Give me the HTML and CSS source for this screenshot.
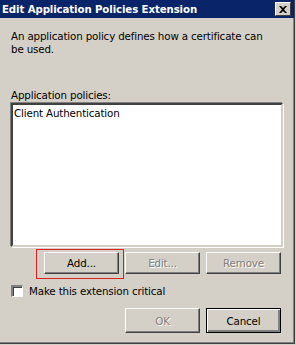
FILE: index.html
```html
<!DOCTYPE html>
<html>
<head>
<meta charset="utf-8">
<link rel="stylesheet" href="styles.css">
</head>
<body>
<div class="window">
  <div class="titlebar">
    <span class="title">Edit Application Policies Extension</span>
    <span class="close"><svg width="8" height="7" viewBox="0 0 8 7"><path d="M0 0h2l2 2 2-2h2l-3 3.5 3 3.5h-2l-2-2-2 2h-2l3-3.5z" fill="#000"/></svg></span>
  </div>
  <div class="content">
    <p class="desc">An application policy defines how a certificate can be used.</p>
    <div class="label">Application policies:</div>
    <div class="listbox">
      <div class="item">Client Authentication</div>
    </div>
    <div class="row btnrow">
      <span class="focus"><button class="btn">Add...</button></span>
      <button class="btn disabled">Edit...</button>
      <button class="btn disabled">Remove</button>
    </div>
    <label class="check"><span class="box"></span>Make this extension critical</label>
    <div class="row footer">
      <button class="btn disabled">OK</button>
      <button class="btn default">Cancel</button>
    </div>
  </div>
</div>
</body>
</html>
```
FILE: styles.css
```css
html, body { margin: 0; padding: 0; }
body { background: #d4d0c8; font-family: "DejaVu Sans", sans-serif; font-size: 10.3px; color: #000; }
.window {
  width: 294px; height: 343px;
  background: #d4d0c8;
  border-right: 1px solid #404040; border-bottom: 1px solid #404040;
  box-shadow: inset -1px -1px 0 #808080;
  display: flex; flex-direction: column;
}
.titlebar {
  height: 18px; background: #0a246a;
  display: flex; align-items: center; justify-content: space-between;
  padding: 0 3px 0 2px;
}
.title { color: #fff; font-weight: bold; font-size: 10.2px; letter-spacing: -0.1px; }
.close {
  width: 14px; height: 12px; background: #d4d0c8;
  border-top: 1px solid #fff; border-left: 1px solid #fff;
  border-right: 1px solid #404040; border-bottom: 1px solid #404040;
  display: flex; align-items: center; justify-content: center;
}
.content { padding: 12px 11px 0 11px; display: flex; flex-direction: column; }
.desc { margin: 0; line-height: 13px; width: 262px; letter-spacing: -0.15px; }
.label { margin-top: 33px; line-height: 13px; letter-spacing: -0.15px; }
.listbox {
  margin-top: 1px; width: 268px; height: 140px; background: #fff;
  border-top: 2px solid #404040; border-left: 2px solid #404040;
  border-right: 2px solid #d4d0c8; border-bottom: 2px solid #d4d0c8;
  box-shadow: -1px -1px 0 #808080, 1px 1px 0 #fff;
}
.item { padding: 2px 1px; letter-spacing: -0.15px; line-height: 13px; }
.row { display: flex; justify-content: flex-end; gap: 6px; }
.btnrow { margin-top: 5px; padding-right: 2px; }
.focus { border: 1px solid #e02020; padding: 2px 4px 4px 7px; margin-top: -3px; margin-right: -5px; }
.btn {
  width: 75px; height: 22px; background: #d4d0c8;
  font-family: "DejaVu Sans", sans-serif; font-size: 10.3px; letter-spacing: -0.15px; color: #000;
  border-top: 1px solid #fff; border-left: 1px solid #fff;
  border-right: 1px solid #404040; border-bottom: 1px solid #404040;
  box-shadow: inset -1px -1px 0 #808080;
  padding: 0; margin: 0;
}
.btn.disabled { color: #808080; text-shadow: 1px 1px 0 #fff; }
.btn.default { border: 1px solid #000; box-shadow: inset 1px 1px 0 #fff, inset -2px -2px 0 #808080; }
.check { display: flex; align-items: center; gap: 6px; margin-top: 6px; letter-spacing: -0.15px; }
.box {
  width: 9px; height: 9px; background: #fff;
  border-top: 2px solid #808080; border-left: 2px solid #808080;
  border-right: 1px solid #fff; border-bottom: 1px solid #fff;
  box-shadow: inset 1px 1px 0 #404040;
}
.footer { margin-top: 11px; padding-right: 2px; }
.footer .btn { height: 25px; }
```
